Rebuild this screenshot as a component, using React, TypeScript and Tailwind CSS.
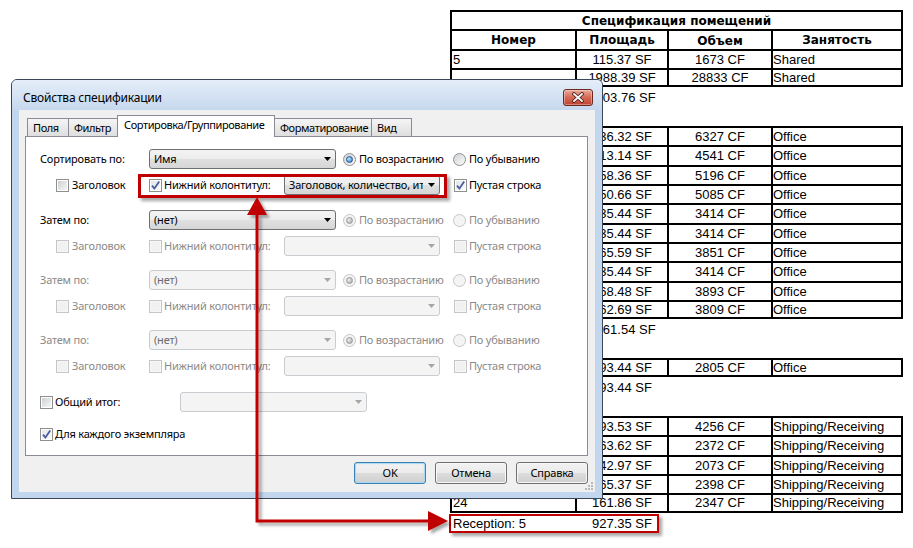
import clsx from "clsx";

const gray = "text-[#8a8a8a]";

type Row = {a?: string; b?: string; c?: string; d?: string; lined?: boolean; last?: boolean};

const rows: Row[] = [
    {a: "5", b: "115.37 SF", c: "1673 CF", d: "Shared", lined: true},
    {b: "1988.39 SF", c: "28833 CF", d: "Shared", lined: true, last: true},
    {b: "2103.76 SF"},
    {},
    {b: "436.32 SF", c: "6327 CF", d: "Office", lined: true},
    {b: "313.14 SF", c: "4541 CF", d: "Office", lined: true},
    {b: "358.36 SF", c: "5196 CF", d: "Office", lined: true},
    {b: "350.66 SF", c: "5085 CF", d: "Office", lined: true},
    {b: "235.44 SF", c: "3414 CF", d: "Office", lined: true},
    {b: "235.44 SF", c: "3414 CF", d: "Office", lined: true},
    {b: "265.59 SF", c: "3851 CF", d: "Office", lined: true},
    {b: "235.44 SF", c: "3414 CF", d: "Office", lined: true},
    {b: "268.48 SF", c: "3893 CF", d: "Office", lined: true},
    {b: "262.69 SF", c: "3809 CF", d: "Office", lined: true, last: true},
    {b: "2961.54 SF"},
    {},
    {b: "193.44 SF", c: "2805 CF", d: "Office", lined: true, last: true},
    {b: "193.44 SF"},
    {},
    {b: "293.53 SF", c: "4256 CF", d: "Shipping/Receiving", lined: true},
    {b: "163.62 SF", c: "2372 CF", d: "Shipping/Receiving", lined: true},
    {b: "142.97 SF", c: "2073 CF", d: "Shipping/Receiving", lined: true},
    {b: "165.37 SF", c: "2398 CF", d: "Shipping/Receiving", lined: true},
    {a: "24", b: "161.86 SF", c: "2347 CF", d: "Shipping/Receiving", lined: true, last: true},
    {a: "Reception: 5", b: "927.35 SF"},
];

function TableRow({row}: {row: Row}) {
    const line = row.lined ? "border-black" : "border-transparent";
    return (
        <div className={clsx("flex h-[19.33px] whitespace-nowrap border-x-2 border-t-2", line, row.last && "border-b-2")}>
            <div className="flex w-[123px] items-center pl-[1px]">{row.a}</div>
            <div className={clsx("flex w-[92px] items-center justify-center border-l-2", line)}>{row.b}</div>
            <div className={clsx("flex w-[104px] items-center justify-center border-l-2", line)}>{row.c}</div>
            <div className={clsx("flex flex-1 items-center border-l-2", line)}>{row.d}</div>
        </div>
    );
}

function Check({checked = false, disabled = false}: {checked?: boolean; disabled?: boolean}) {
    return (
        <span
            className={clsx(
                "relative flex h-[13px] w-[13px] shrink-0 items-center justify-center border",
                disabled ? "border-[#c4c6c8] bg-[#f7f7f7]" : "border-[#8e8f8f] bg-white"
            )}>
            <span
                className={clsx(
                    "h-[9px] w-[9px]",
                    disabled
                        ? "bg-[#f1f1f1]"
                        : checked
                          ? "bg-gradient-to-br from-[#e3e5e8] to-[#fbfbfb]"
                          : "bg-gradient-to-br from-[#cdd0d4] to-[#f7f7f7]"
                )}
            />
            {checked && (
                <svg className="absolute left-0 top-0" width="11" height="11" viewBox="0 0 11 11">
                    <path d="M2 5.6 L4.4 8.6 L9.2 1.6" fill="none" stroke="#4a5e9c" strokeWidth="1.8" />
                </svg>
            )}
        </span>
    );
}

function Radio({checked = false, disabled = false}: {checked?: boolean; disabled?: boolean}) {
    return (
        <span
            className={clsx(
                "flex h-[13px] w-[13px] shrink-0 items-center justify-center rounded-full border",
                disabled ? "border-[#c4c6c8] bg-[#f4f4f4]" : "border-[#8e8f8f] bg-gradient-to-br from-[#d0d3d7] to-[#fafafa]"
            )}>
            {checked && (
                <span
                    className={clsx(
                        "h-[7px] w-[7px] rounded-full border",
                        disabled
                            ? "border-[#9a9a9a] bg-[radial-gradient(circle_at_35%_35%,#efefef,#a0a0a0)]"
                            : "border-[#24548e] bg-[radial-gradient(circle_at_35%_35%,#baedff,#2372c8)]"
                    )}
                />
            )}
        </span>
    );
}

function Combo({value, width, on}: {value?: string; width: string; on: boolean}) {
    return (
        <div
            className={clsx(
                "flex h-[20px] shrink-0 items-center rounded-[3px] border",
                width,
                on
                    ? "border-[#707070] bg-[linear-gradient(#f4f4f4,#ececec_50%,#e0e0e0_50%,#d6d6d6)] text-black"
                    : "border-[#c9cdd1] bg-[#f4f4f4] text-[#6d6d6d]"
            )}>
            <span className="flex-1 overflow-hidden whitespace-nowrap pl-[4px]">{value}</span>
            <span className="flex w-[16px] shrink-0 justify-center">
                <svg width="7" height="4" viewBox="0 0 7 4">
                    <path d="M0 0h7L3.5 4z" fill={on ? "#000" : "#a6a6a6"} />
                </svg>
            </span>
        </div>
    );
}

function SortRow({label, value, mode, className}: {label: string; value: string; mode: "first" | "mid" | "off"; className?: string}) {
    const on = mode !== "off";
    const radios = mode === "first";
    return (
        <div className={clsx("flex h-[20px] items-center", className)}>
            <span className={clsx("w-[109px] shrink-0", on ? "text-black" : gray)}>{label}</span>
            <Combo value={value} width="w-[187px]" on={on} />
            <span className="ml-[7px] flex w-[110px] shrink-0 items-center gap-[3px]">
                <Radio checked disabled={!radios} />
                <span className={radios ? "text-black" : gray}>По возрастанию</span>
            </span>
            <span className="flex items-center gap-[3px]">
                <Radio disabled={!radios} />
                <span className={radios ? "text-black" : gray}>По убыванию</span>
            </span>
        </div>
    );
}

function OptRow({on, className}: {on: boolean; className?: string}) {
    const t = on ? "text-black" : gray;
    return (
        <div className={clsx("flex h-[20px] items-center pl-[16px]", className)}>
            <span className="flex w-[93px] shrink-0 items-center gap-[3px]">
                <Check disabled={!on} />
                <span className={t}>Заголовок</span>
            </span>
            <span className="flex w-[135px] shrink-0 items-center gap-[2px]">
                <Check checked={on} disabled={!on} />
                <span className={t}>Нижний колонтитул:</span>
            </span>
            <Combo value={on ? "Заголовок, количество, итог" : ""} width="w-[156px]" on={on} />
            <span className="ml-[14px] flex items-center gap-[2px]">
                <Check checked={on} disabled={!on} />
                <span className={t}>Пустая строка</span>
            </span>
        </div>
    );
}

function Tab({label, width, active}: {label: string; width: string; active?: boolean}) {
    return (
        <div
            className={clsx(
                "-ml-px flex items-center whitespace-nowrap border-x border-t border-[#898c95] tracking-[-0.4px] first:ml-0",
                width,
                active
                    ? "relative z-10 h-[22px] bg-white pb-[3px] pl-[6px]"
                    : "mb-px h-[18px] bg-gradient-to-b from-[#f5f5f5] to-[#dedede] pl-[5px] pt-[2px]"
            )}>
            {label}
        </div>
    );
}

function Button({label, primary}: {label: string; primary?: boolean}) {
    return (
        <button
            type="button"
            className={clsx(
                "flex h-[22px] w-[72px] items-center justify-center rounded-[3px] border bg-[linear-gradient(#f2f2f2,#ebebeb_50%,#dddddd_50%,#cfcfcf)] text-black",
                primary
                    ? "border-[#3c7fb1] shadow-[inset_0_0_1px_1px_#a4daf6]"
                    : "border-[#707070] shadow-[inset_0_0_0_1px_#f8f8f8]"
            )}>
            {label}
        </button>
    );
}

export default function App() {
    return (
        <div className="relative h-[548px] w-[913px] overflow-hidden bg-white">
            <div className="ml-[450px] w-[453px] pt-[10px] font-['Liberation_Sans',Arial,sans-serif] text-[13px] leading-none text-black">
                <div className="flex h-[19.33px] items-center justify-center border-x-2 border-t-2 border-black font-['DejaVu_Sans',sans-serif] text-[12px] font-bold">
                    Спецификация помещений
                </div>
                <div className="flex h-[19.33px] border-x-2 border-t-2 border-black font-['DejaVu_Sans',sans-serif] text-[12px] font-bold">
                    <div className="flex w-[123px] items-center justify-center">Номер</div>
                    <div className="flex w-[92px] items-center justify-center border-l-2 border-black">Площадь</div>
                    <div className="flex w-[104px] items-center justify-center border-l-2 border-black pt-[3px]">Объем</div>
                    <div className="flex flex-1 items-center justify-center border-l-2 border-black">Занятость</div>
                </div>
                {rows.map((row, i) => (
                    <TableRow key={i} row={row} />
                ))}
            </div>

            {/* dialog window */}
            <div className="absolute left-[11px] top-[79px] h-[420px] w-[592px] rounded-t-[6px] border border-[#3b4656] bg-[#c2d6ee] font-['Noto_Sans',sans-serif] text-[11px] tracking-[-0.2px] text-black">
                <div className="flex h-[30px] items-center justify-between rounded-t-[5px] bg-gradient-to-b from-[#e5eef9] to-[#c6d8ee] pl-[11px] pr-[9px] pt-[5px]">
                    <span className="text-[12px]">Свойства спецификации</span>
                    <div className="flex h-[17px] w-[30px] items-center justify-center rounded-[3px] border border-[#6b2a20] bg-gradient-to-b from-[#eaa897] via-[#d26a57] to-[#c0412f] shadow-[inset_0_0_0_1px_rgba(255,255,255,0.35)]">
                        <svg width="14" height="11" viewBox="0 0 14 11">
                            <path d="M3 2 L11 9 M11 2 L3 9" stroke="#4b1810" strokeWidth="3.6" strokeLinecap="round" />
                            <path d="M3 2 L11 9 M11 2 L3 9" stroke="#f4f4f4" strokeWidth="2" strokeLinecap="round" />
                        </svg>
                    </div>
                </div>
                <div className="relative mx-[7px] flex h-[382px] flex-col bg-[#f0f0f0] pl-[6px] pr-[7px] pt-[5px]">
                    <div className="-mb-px flex h-[22px] items-end pl-[2px]">
                        <Tab label="Поля" width="w-[42px]" />
                        <Tab label="Фильтр" width="w-[50px]" />
                        <Tab label="Сортировка/Группирование" width="w-[158px]" active />
                        <Tab label="Форматирование" width="w-[98px]" />
                        <Tab label="Вид" width="w-[41px]" />
                    </div>
                    <div className="h-[320px] border border-[#898c95] bg-white pl-[14px] pt-[12px]">
                        <SortRow label="Сортировать по:" value="Имя" mode="first" />
                        <OptRow on className="mt-[6px]" />
                        <SortRow label="Затем по:" value="(нет)" mode="mid" className="mt-[15px]" />
                        <OptRow on={false} className="mt-[6px]" />
                        <SortRow label="Затем по:" value="(нет)" mode="off" className="mt-[14px]" />
                        <OptRow on={false} className="mt-[6px]" />
                        <SortRow label="Затем по:" value="(нет)" mode="off" className="mt-[14px]" />
                        <OptRow on={false} className="mt-[6px]" />
                        <div className="mt-[16px] flex h-[20px] items-center">
                            <span className="flex w-[140px] shrink-0 items-center gap-[2px]">
                                <Check />
                                <span>Общий итог:</span>
                            </span>
                            <Combo value="" width="w-[187px]" on={false} />
                        </div>
                        <div className="mt-[12px] flex h-[20px] items-center gap-[2px]">
                            <Check checked />
                            <span>Для каждого экземпляра</span>
                        </div>
                    </div>
                    <div className="mt-[6px] flex justify-end gap-[9px]">
                        <Button label="OK" primary />
                        <Button label="Отмена" />
                        <Button label="Справка" />
                    </div>
                    <svg className="absolute bottom-[1px] right-[1px]" width="10" height="10" viewBox="0 0 10 10">
                        <g fill="#b9b9b9">
                            <rect x="7" y="1" width="2" height="2" />
                            <rect x="4" y="4" width="2" height="2" />
                            <rect x="7" y="4" width="2" height="2" />
                            <rect x="1" y="7" width="2" height="2" />
                            <rect x="4" y="7" width="2" height="2" />
                            <rect x="7" y="7" width="2" height="2" />
                        </g>
                    </svg>
                </div>
            </div>

            {/* annotations */}
            <div className="absolute left-[138px] top-[174px] h-[24px] w-[309px] border-[3px] border-[#c00000] shadow-[3px_3px_3px_rgba(0,0,0,0.35)]" />
            <div className="absolute left-[449px] top-[514px] h-[19px] w-[210px] border-2 border-[#c00000] shadow-[3px_3px_3px_rgba(0,0,0,0.35)]" />
            <svg className="pointer-events-none absolute left-0 top-0" width="913" height="548" viewBox="0 0 913 548">
                <defs>
                    <filter id="arrow-shadow" x="-20%" y="-20%" width="140%" height="140%">
                        <feDropShadow dx="3" dy="3" stdDeviation="1.5" floodColor="#000" floodOpacity="0.35" />
                    </filter>
                </defs>
                <g filter="url(#arrow-shadow)">
                    <polyline points="257,212 257,521 431,521" fill="none" stroke="#c00000" strokeWidth="3" />
                    <polygon points="257,197 247,215 267,215" fill="#c00000" />
                    <polygon points="448,521 428,511 428,531" fill="#c00000" />
                </g>
            </svg>
        </div>
    );
}
